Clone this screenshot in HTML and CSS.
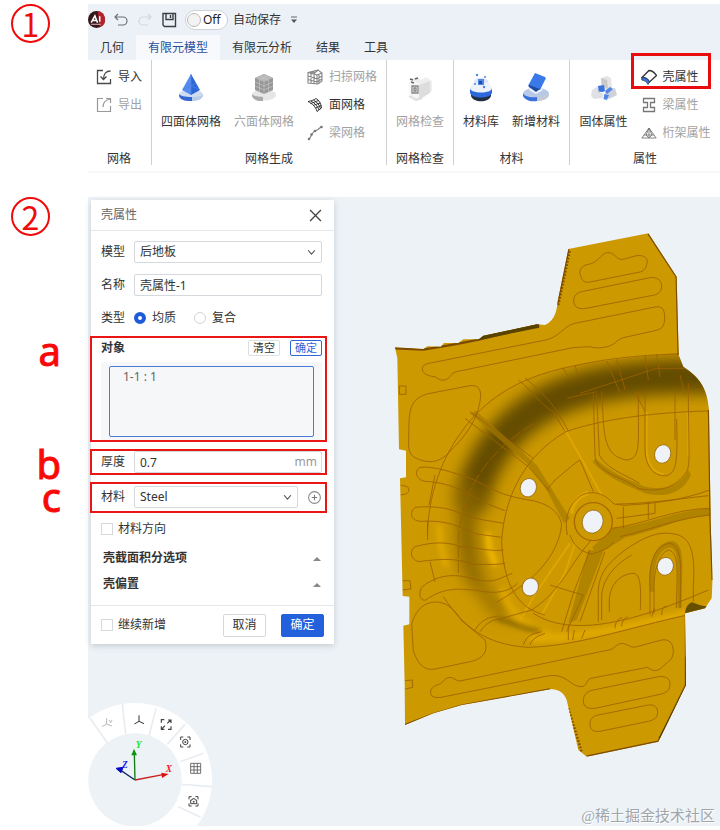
FILE: index.html
```html
<!DOCTYPE html>
<html lang="zh-CN">
<head>
<meta charset="utf-8">
<meta name="viewport" content="width=device-width, initial-scale=1">
<title>壳属性</title>
<link rel="stylesheet" href="styles.css">
</head>
<body>
<main class="guide">
  <section class="step">
    <div class="step-number">1</div>
    <div class="app">
      <div class="titlebar">
        <svg class="logo" viewBox="0 0 16 16" aria-hidden="true"><circle cx="8" cy="8" r="8" fill="#35161b"/><path d="M9 0a8 8 0 0 1 2 15.400z" fill="#b3232c"/><path d="M3 11 6.500 4.500 9 11M4.500 9h4M11 5v5" fill="none" stroke="#fff" stroke-width="1.500"/><path d="M3 12.500h9" stroke="#d8b3b5"/></svg>
        <button class="tool" aria-label="撤销"><svg viewBox="0 0 16 16"><path d="M5 2 2 5l3 3M2 5h8a4 4 0 0 1 0 8H5" fill="none" stroke="#6b7075" stroke-width="1.200"/></svg></button>
        <button class="tool" aria-label="重做"><svg viewBox="0 0 16 16"><path d="m11 2 3 3-3 3M14 5H6a4 4 0 0 0 0 8h5" fill="none" stroke="#d3d8dd" stroke-width="1.200"/></svg></button>
        <button class="tool" aria-label="保存"><svg viewBox="0 0 16 16"><path d="M2 1.500h12.500v13H3.500L2 13zM5 1.500v6h7v-6M9.500 3v3" fill="none" stroke="#3a3f44" stroke-width="1.400"/></svg></button>
        <label class="switch"><input type="checkbox" aria-label="自动保存"><span>Off</span></label>
        <span class="autosave">自动保存</span>
        <button class="more" aria-label="更多"><svg viewBox="0 0 8 8"><path d="M1 1h6" stroke="#666"/><path d="M1 3.500h6L4 7z" fill="#555"/></svg></button>
      </div>
      <nav class="tabs">
        <button class="tab">几何</button><button class="tab active">有限元模型</button><button class="tab">有限元分析</button><button class="tab">结果</button><button class="tab">工具</button>
      </nav>
      <div class="ribbon">
        <div class="group">
          <div class="group-body">
            <div class="small-list">
              <button class="small"><svg viewBox="0 0 16 16"><path d="M7 1.500H1.500v13h13V10M14.500 2C10 2 7.500 5 7.500 10M4.500 7.500l3 3 3-3" fill="none" stroke="#4a4a4a" stroke-width="1.300"/></svg>导入</button>
              <button class="small" disabled><svg viewBox="0 0 16 16"><path d="M7 1.500H1.500v13h13V9M7 10C7 6 9.500 3 14 2M10 1.500h4.500V6" fill="none" stroke="#999" stroke-width="1.200"/></svg>导出</button>
            </div>
          </div>
          <div class="caption">网格</div>
        </div>
        <div class="group">
          <div class="group-body">
            <button class="big"><svg viewBox="0 0 30 30"><ellipse cx="15" cy="23" rx="12" ry="5.500" fill="#cfdcf2"/><path d="M3 22v2c1 4 7 5.500 13 5v-4C9 25 4 24 3 22z" fill="#3568cf"/><path d="M16 25c6 0 10-1 11-3v2c-1 3-5 5-11 5z" fill="#b9cbea"/><path d="M15 2 6 18l9 5z" fill="#568cf0"/><path d="m15 2 9 16-9 5z" fill="#2d66d6"/><path d="m10 11 5 3 5-3M15 2v21M7 17l8-3 8 3" fill="none" stroke="#4d82e8" stroke-width=".7"/></svg>四面体网格</button>
            <button class="big" disabled><svg viewBox="0 0 30 30"><ellipse cx="15" cy="23" rx="12" ry="5.500" fill="#e6e6e6"/><path d="M3 22v2c1 4 7 5.500 11 5v-4C9 25 4 24 3 22z" fill="#aaa"/><path d="m15 2 9 4v12l-9 4-9-4V6z" fill="#979797"/><path d="m15 2 9 4-9 4-9-4z" fill="#b8b8b8"/><path d="M15 10v12M6 10l9 4 9-4M6 14l9 4 9-4M10.500 8v12M19.500 8v12M10 4l9 4M19 4l-9 4" fill="none" stroke="#c4c4c4" stroke-width=".7"/></svg>六面体网格</button>
            <div class="small-list">
              <button class="small" disabled><svg viewBox="0 0 16 16"><path d="M1 3.500 11 1l4 3v8l-4 3-10-1zM1 3.500 10 6v9M10 6l5-2M1 7l9 3 5-3M1 10.500l9 2.500 5-3M4 3v11M7 2v12.500M4 4.500 8 1.500M6.500 5 11 1M12 5v9" fill="none" stroke="#858585" stroke-width="1.100"/></svg>扫掠网格</button>
              <button class="small"><svg viewBox="0 0 16 16"><path d="M1 4.500C4 4 7 3 9 1.500c3 1.500 5 5 5.500 9.500L10 14.500C9 10 5 6.500 1 4.500zM3.500 6.500C7 5.500 9 4.500 11.500 3.500M6 8.500c3-1 5-2 7.500-2.500M8.500 11c2-1 4-1.500 6-2.500M4 4c4 2 7 6 8 9M6.500 3c4 2.500 6 5 7 9" fill="none" stroke="#262626" stroke-width=".9"/></svg>面网格</button>
              <button class="small" disabled><svg viewBox="0 0 16 16"><path d="M2 14C5 11 5 7 8 6s3-1 6-4" fill="none" stroke="#888" stroke-width="1.200"/><g fill="#777"><circle cx="2" cy="14" r="1.300"/><circle cx="4.500" cy="9.500" r="1.300"/><circle cx="8" cy="6" r="1.300"/><circle cx="14.500" cy="2" r="1.300"/></g></svg>梁网格</button>
            </div>
          </div>
          <div class="caption">网格生成</div>
        </div>
        <div class="group">
          <div class="group-body">
            <button class="big" disabled><svg viewBox="0 0 30 30"><path d="m4 7 8-2 4 3 5-3 6 4v10l-9 7-7 2-6-4z" fill="#eee"/><path d="m4 7 10 5v15L5 23z" fill="#f7f7f7"/><path d="m14 13 11-4v12l-11 6z" fill="#ddd"/><path d="m5 7 3 1M6 10l3 1M10 7l3-1" stroke="#666" stroke-width="1.500"/><path d="M7 14h6v7H7zM9 16h2v3H9z" fill="none" stroke="#858585" stroke-width="1.300"/><path d="m4 24 7 4 6-2" fill="none" stroke="#ddd" stroke-width="2"/></svg>网格检查</button>
          </div>
          <div class="caption">网格检查</div>
        </div>
        <div class="group">
          <div class="group-body">
            <button class="big"><svg viewBox="0 0 30 30"><path d="M5 20v4c2 7 18 7 20 0v-4z" fill="#222f42"/><path d="M4 16v5c2 6 20 6 22 0v-5z" fill="#2d69dc"/><path d="M8 9 4 16c0 6 22 6 22 0l-4-7z" fill="#edf2fb"/><ellipse cx="15" cy="9" rx="7" ry="3" fill="#dce6f7"/><path d="M12 7h6v6h-6z" fill="#4f86e7"/><path d="M13 9h3v3h-3z" fill="#1e4da9"/><g fill="#4b85ed"><circle cx="11" cy="3" r="1.200"/><circle cx="19" cy="5" r="1"/><circle cx="9" cy="12" r="1"/><circle cx="18" cy="15" r="1.200"/></g></svg>材料库</button>
            <button class="big"><svg viewBox="0 0 30 30"><ellipse cx="15" cy="22" rx="13" ry="6.500" fill="#b8c9e8"/><path d="M2 21v3c2 4 7 6 14 5v-4C9 26 3 24 2 21z" fill="#3870dc"/><path d="M16 25c6 0 10-2 12-4v3c-2 3-6 5-12 5z" fill="#c4cbd6"/><path d="m8 18 7-8 7 8-7 4z" fill="#eef3fc"/><path d="m14 1 10 4c1 1 1 2 0 3l-5 10-11-3c-1-1-1-2 0-3z" fill="#3c79e8"/><path d="m8 13 11 4-4 3-7-5z" fill="#204b9d"/></svg>新增材料</button>
          </div>
          <div class="caption">材料</div>
        </div>
        <div class="group last">
          <div class="group-body">
            <button class="big"><svg viewBox="0 0 30 30"><path d="m12 6 6-2 4 2 1 10-6 2-5-4z" fill="#e4e4e4"/><path d="m12 6 6 2 1 9-6-3z" fill="#c9c9c9"/><path d="m3 18 8-5 5 4-2 9-9 1-3-3z" fill="#dfe1e5"/><path d="m17 18 9-2 2 7-8 4-5-4z" fill="#cdd1d8"/><path d="m9 14 6-1 1 6-6 2z" fill="#3c74df"/><path d="m16 19 5-4 3 2-6 5zM15 22l5 1-2 5-4-1z" fill="#4f86e7"/><path d="m10 20 5 1-1 6" fill="none" stroke="#fff"/></svg>固体属性</button>
            <div class="small-list">
              <button class="small boxed"><svg viewBox="0 0 16 16"><path d="M1 8.500 8 1.500c3 0 5.500 2 7.500 5L8.500 13C7 10 4.500 8.500 1 8.500z" fill="#fff" stroke="#333" stroke-width="1.300"/><path d="M1 8.500c3.500 0 6 1.500 7.500 4.500L7 15.500C5.500 12.500 3.500 11.500.7 11z" fill="#3f73d4" stroke="#273f70" stroke-width=".8"/></svg>壳属性</button>
              <button class="small" disabled><svg viewBox="0 0 16 16"><path d="M2.500 1.500h11v4h-4v5h4v4h-11v-4h4v-5h-4z" fill="none" stroke="#777" stroke-width="1.300"/></svg>梁属性</button>
              <button class="small" disabled><svg viewBox="0 0 16 16"><path d="M8 3 .8 13h14.400zM8 3v10M8 3 5 10l3 3 3-3zM3 10h10" fill="none" stroke="#777" stroke-width=".9"/></svg>桁架属性</button>
            </div>
          </div>
          <div class="caption">属性</div>
        </div>
      </div>
    </div>
  </section>

  <section class="step">
    <div class="step-number">2</div>
    <div class="viewport">
      <div class="side">
        <form class="dialog">
          <div class="dialog-head">
            <span>壳属性</span>
            <button type="button" class="close" aria-label="关闭"><svg viewBox="0 0 12 12"><path d="m1 1 10 10M11 1 1 11" stroke="#444" stroke-width="1.200"/></svg></button>
          </div>
          <div class="fields">
            <div class="field">
              <label for="model">模型</label>
              <div class="control"><select id="model"><option>后地板</option></select><svg class="arrow" viewBox="0 0 8 8"><path d="m1 2 3 3.500L7 2" fill="none" stroke="#555"/></svg></div>
            </div>
            <div class="field">
              <label for="name">名称</label>
              <div class="control"><input id="name" type="text" value="壳属性-1"></div>
            </div>
            <div class="field">
              <span>类型</span>
              <div class="radios">
                <label><input type="radio" name="kind" checked>均质</label>
                <label><input type="radio" name="kind">复合</label>
              </div>
            </div>
          </div>
          <div class="callout">
            <span class="mark">a</span>
            <div class="object-head">
              <label for="object">对象</label>
              <button type="button" class="mini">清空</button>
              <button type="button" class="mini accent">确定</button>
            </div>
            <div class="object-body"><textarea id="object" readonly>1-1 : 1</textarea></div>
          </div>
          <div class="callout">
            <span class="mark">b</span>
            <div class="field">
              <label for="thickness">厚度</label>
              <div class="control"><input id="thickness" type="text" value="0.7"><span class="unit">mm</span></div>
            </div>
          </div>
          <div class="callout roomy">
            <span class="mark">c</span>
            <div class="field with-add">
              <label for="material">材料</label>
              <div class="control"><select id="material"><option>Steel</option></select><svg class="arrow" viewBox="0 0 8 8"><path d="m1 2 3 3.500L7 2" fill="none" stroke="#555"/></svg></div>
              <button type="button" class="add" aria-label="新增材料"><svg viewBox="0 0 14 14"><circle cx="7" cy="7" r="5.500" fill="none" stroke="#888"/><path d="M4.500 7h5M7 4.500v5" stroke="#777"/></svg></button>
            </div>
          </div>
          <label class="check direction"><input type="checkbox">材料方向</label>
          <button type="button" class="fold">壳截面积分选项<svg viewBox="0 0 8 5"><path d="M0 5 4 1l4 4z" fill="#888"/></svg></button>
          <button type="button" class="fold">壳偏置<svg viewBox="0 0 8 5"><path d="M0 5 4 1l4 4z" fill="#888"/></svg></button>
          <div class="dialog-foot">
            <label class="check"><input type="checkbox">继续新增</label>
            <button type="button" class="action">取消</button>
            <button type="button" class="action primary">确定</button>
          </div>
        </form>
        <svg class="dial" viewBox="24 30 381 378" role="img" aria-label="视图方向">
          <circle cx="165" cy="270" r="231" fill="#fff"/>
          <circle cx="165" cy="270" r="140" fill="#edf2f6"/>
          <path d="m30 85 53 75M127 42l10 90M228 55l-21 83M315 103l-53 60M370 190l-70 25M395 290l-90-7M362 382l-67-32" stroke="#e9edf1" stroke-width="5"/>
          <g fill="none" stroke="#bbb" stroke-width="3"><path d="M80 84v18l-14 8M80 102l16 6M88 90l4 8 4-8"/></g>
          <path d="M177 76v18l-14 8M177 94l15 7" fill="none" stroke="#333" stroke-width="3"/>
          <path d="M244 98v-9h9M264 90h9v9M273 109v9h-9M253 118h-9v-9M262 100l10-10M255 107l-10 10" fill="none" stroke="#444" stroke-width="3.500"/>
          <path d="M302 150v-9h8M322 141h8v9M330 163v8h-8M310 171h-8v-8" fill="none" stroke="#444" stroke-width="3"/><circle cx="316" cy="156" r="8" fill="none" stroke="#444" stroke-width="3"/><circle cx="316" cy="156" r="3" fill="#555"/>
          <path d="M332 220h30v30h-30zM342 220v30M352 220v30M332 230h30M332 240h30" fill="none" stroke="#555" stroke-width="2.500"/>
          <path d="M327 328v-8h8M346 320h8v8M354 340v8h-8M335 348h-8v-8" fill="none" stroke="#444" stroke-width="3"/><path d="M332 330h4l2-4h6l2 4h4v11h-18z" fill="none" stroke="#444" stroke-width="3"/><circle cx="341" cy="335" r="3" fill="#555"/>
          <path d="m165 270-47-32" stroke="#172469" stroke-width="4"/><path d="m108 235 21-3-6 16z" fill="#0b0bc2" stroke="#0b0bc2" stroke-width="3"/>
          <path d="m165 270-2-78" stroke="#147b14" stroke-width="4"/><path d="m162 176 9 20h-17z" fill="#0d930d"/>
          <path d="m165 270 84-16" stroke="#c91e1e" stroke-width="4"/><path d="m266 252-20 12-2-16z" fill="#dd1010"/>
          <g class="axis"><text x="167" y="173" fill="#26e126">Y</text><text x="257" y="247" fill="#f01818">X</text><text x="126" y="235" fill="#1515ee">Z</text></g>
        </svg>
      </div>

      <svg class="part" viewBox="0 0 990 1605" role="img" aria-label="后地板模型">
        <defs>
          <clipPath id="body"><path d="M15 367 100 372 112 364 152 365 162 354 205 354 220 343 266 343 280 332 440 298 465 300C485 292 500 270 502 235L535 72 775 25 860 155 866 390 880 425C925 455 952 485 957 555L962 895 968 1065 965 1120 945 1150 885 1165 888 1380 805 1550 590 1595 565 1575 530 1425C520 1400 505 1393 480 1393L215 1440 130 1465 45 1500 44 1380 40 1202 58 1198V1115L38 1113 30 760 48 757V677L27 673 22 400z"/></clipPath>
          <clipPath id="bowl"><path d="M990 375C770 390 640 405 540 425 360 460 290 530 235 590 150 690 115 800 115 930 120 1050 150 1130 215 1190 270 1240 320 1260 400 1268 570 1262 770 1190 990 1145z"/></clipPath>
          <filter id="soft" x="-30%" y="-30%" width="160%" height="160%"><feGaussianBlur stdDeviation="22"/></filter>
          <filter id="fine" x="-30%" y="-30%" width="160%" height="160%"><feGaussianBlur stdDeviation="8"/></filter>
        </defs>
        <g clip-path="url(#body)">
          <path d="M0 0h990v1605H0z" fill="#cc9900"/>
          <g clip-path="url(#bowl)">
            <g fill="none" filter="url(#soft)" stroke-linecap="round">
              <path d="M970 455C750 450 570 472 440 550 330 620 270 720 245 820" stroke="#644b00" stroke-width="104"/>
              <path d="M240 800c-20 100-10 190 15 260" stroke="#866300" stroke-width="56"/>
              <path d="M245 1010c20 65 40 105 90 155" stroke="#906b00" stroke-width="34"/>
            </g>
            <g fill="none" filter="url(#fine)" stroke-linecap="round">
              <path d="M148 905c0 50 8 80 20 115" stroke="#e6ae00" stroke-width="12"/>
              <path d="M295 930c0 40 10 60 20 85" stroke="#f0b700" stroke-width="18"/>
              <path d="M340 1100c25 75 85 120 170 140" stroke="#dca500" stroke-width="24"/>
              <path d="M430 1240c170 0 300-40 540-90" stroke="#e0a900" stroke-width="24"/>
              <path d="M325 1180c40 15 80 30 120 38" stroke="#886500" stroke-width="14"/>
            </g>
          </g>
          <g fill="#a47a00" opacity=".65">
            <path d="M240 565 258 557 440 720 540 880 522 895 470 795 410 715z"/>
            <path d="M615 700c50 45 90 60 150 85 55 10 100 5 130-50l8 14c-25 60-85 70-140 55-60-25-110-45-155-92z"/>
            <path d="M665 910c90-5 200-55 297-60v22c-90 3-160 45-255 65l-90 55-10-25z"/>
            <path d="m595 975 45 5-80 205-25 10z"/>
            <path d="M780 1100c-10-80 15-145 60-152 40 0 40 55 35 130v70h-12v-95c0-60-5-85-25-85-35 5-50 55-45 132z"/>
          </g>
          <path d="M885 1165c2-15 5-25 20-33 30 10 40 15 62 8l-20 20z" fill="#665000"/>
          <g fill="none" stroke="#e2a900" stroke-width="6" opacity=".8">
            <path d="M770 560v110c0 50 25 75 50 78"/><path d="M895 560v135"/><path d="M545 865c0-30 20-50 50-62" stroke-width="13"/><path d="m540 955-100 145-50 85M555 955l-30 90-70 125"/><path d="m525 615 60 105 50 90"/>
          </g>
          <g fill="none" stroke="#9e6200" stroke-width="2.500">
            <path d="M575 160c-12-23-2-38 20-42 30-5 35-30 55-35 25-2 25 18 45 21l45-12c22-3 37 8 30 27-3 15-12 22-30 24l-140 28c-13 2-20 0-25-11z"/>
            <path d="m575 200 205-42c20-3 35 8 35 25s-10 26-32 29l-195 38c-22 4-37-4-37-22 0-15 8-24 24-28z"/>
            <path d="m550 296 245-50c20-4 29 7 29 30 0 25-6 35-25 40l-90 20c-25 3-28 18-50 27-25 8-45 6-60 2l-50 3-340 70c-20 3-24 10-32 20-15 12-28 8-40-2-20-3-40-8-40-25 0-12 12-15 30-18l340-68c40-9 50-37 83-49z"/>
            <path d="m110 507 130-25c22-3 32 8 32 30-5 65-40 115-90 165-30 36-65 40-100 24-23-8-28-25-26-60 2-70-5-115 54-134z"/>
            <path d="M865 387C735 390 625 405 540 425 370 460 275 535 215 620 155 700 115 810 112 930"/>
            <path d="M955 558c-180 4-330 28-427 62-115 65-185 185-193 330 5 125 45 200 130 220"/>
            <path d="M570 505 800 430h85M530 520l90-20"/><path d="M430 595c-120 75-210 180-225 340v110" stroke-dasharray="38 7"/>
            <path d="M385 465c45 35 60 70 105 95l35 60M405 458c50 45 80 65 130 160"/><path d="m225 580 190 145 65 75M240 560l190 140"/>
            <path d="m518 428 15 25M555 422l8 28M650 408l40 95M680 403l25 90M765 390l10 75M800 387l10 70M610 505l5 190c10 50 80 60 130 95 65 15 115-5 145-50 12-25 5-60 5-265M620 505l8 185c20 40 70 55 120 85M735 500l30 60M855 500v145M870 450l15 60"/>
            <path d="M635 500l5 90c5 65 15 105 70 115 35-5 37-25 35-135V500M765 500v180c5 60 40 75 65 72 30-10 33-40 30-170"/>
            <path d="M90 727c40-5 100 15 155 35 50 20 75 50 185 65 55 15 75 35 85 70-5 60-40 120-105 175-30 20-55 40-90 60M90 727c-20 12-10 38 15 42 90 5 130 40 180 65l60 23"/>
            <path d="M75 847c50-5 100 0 140 20 55 20 90 20 125 28M75 847c-20 20-10 42 20 42 75-5 110 15 165 38l75 10M75 965c55-15 95-15 140 0 60 5 90 15 125 10M75 965c-20 15-10 40 10 45 75-10 120-10 165 8 45 0 70 2 95-3"/>
            <path d="M97 1085c50-40 105-40 165-20 50 10 65-5 105-20M97 1085c-15 20-5 45 10 40 65-45 110-30 150-30 60 15 100 5 125-20"/>
            <path d="m135 750-18 90M113 890v55M120 1010l15 60M160 1115c75 115 155 145 255 152 165-5 310-65 540-110"/>
            <path d="m335 1180 90-25c105-70 120-160 205-235M430 1165c130 85 350 5 525-70"/>
            <path d="m470 795 25-30 60-50 15-10 40 95M480 1080l65 20 35 10-50 110M600 975l-50 130-35 115M645 980l-75 210"/>
            <path d="M532 930c-10-50 5-95 40-118 35-18 70-8 100 25l30 4c90-5 170-15 255-45M540 930c10 30 30 50 65 57 20-5 50-15 65-35M680 837c90 0 180-15 275-25M665 910c90-10 190-60 295-60M690 935c90-20 170-55 270-65M680 880l115-15v-30M775 830v52M700 845v65"/>
            <path d="M625 1190v-70c-5-75 30-105 80-145 65-45 110-60 160-45 45 15 50 75 45 155v45M635 1185v-75c5-60 55-100 90-120M658 1160v-40c5-45 35-75 75-75 20 5 20 50 18 110M780 1170v-80c-5-80 15-130 60-135 35 10 35 55 30 195M792 1165v-80c0-60 20-105 45-110 30 10 25 60 22 175"/>
            <path d="M255 1215c20-35 50-40 65-40M270 1220c20-30 45-38 65-38M400 1260c10-35 40-35 55-40M420 1260c8-25 35-30 45-35M535 1245v-45M548 1245l5-30M575 1240l10-25M675 1210c0-20 12-30 22-32M695 1205c0-15 8-25 18-30M785 1175l8-25M815 1170c0-20 8-25 15-27"/>
            <path d="M125 1132c45-7 70 25 90 55l70 58c10 35-5 55-40 64l-110 23c-30 5-50-10-65-55l-5-80c10-35 30-60 60-65z"/>
            <path d="m210 1368 455-95c15-10 20-22 40-16 15 6 20 12 35 8l75-20c20-3 35 6 35 35-2 30-20 30-32 45-20 20-35 10-45 2l-170 33c-15 3-10 25-30 25-30 0-45-40-95-33l-325 65c-25 3-35-5-30-22 10-20 25-10 40-30 20-20 35 5 47 3z"/>
            <path d="m610 1395 195-40c20-3 35 5 35 22s-10 27-30 31l-195 42c-20 2-35-3-35-22s10-29 30-33zM625 1470l150-30c18-2 28 7 28 22s-10 23-28 27l-145 30c-18 2-30-3-30-22 0-15 8-24 25-27z"/>
            <path d="M28 483h20v25H28zM32 780l20 5c8 8 5 18-5 22l-15 3M38 1067h22l3 25-25 3M45 1367l22-2 1 22-22 5"/>
          </g>
          <g fill="none" stroke="#7c4b00" stroke-width="7">
            <path d="M15 370 100 374 155 365 210 355 270 343 440 302M502 235 535 72M775 25 860 155 866 390M957 555 962 895 968 1065M888 1165V1380L805 1550 590 1595M45 1500 130 1467 215 1442 480 1393"/>
            <path d="M535 1450 575 1580M505 240 540 75" stroke-dasharray="5 5"/>
          </g>
          <path d="m270 342 175-36v-8l-165 34zM808 1540l80-155v-90 90z" fill="#594300" stroke="#594300" stroke-width="5"/>
          <circle cx="610" cy="890" r="57" fill="#cc9900" stroke="#a96900" stroke-width="4"/>
        </g>
        <g fill="#eff3f7" stroke="#8d5900" stroke-width="2">
          <ellipse cx="415" cy="788" rx="24" ry="28" transform="rotate(18 415 788)"/><ellipse cx="818" cy="687" rx="24" ry="28" transform="rotate(18 818 687)"/><ellipse cx="608" cy="890" rx="31" ry="35" transform="rotate(18 608 890)"/><ellipse cx="826" cy="1024" rx="24" ry="27" transform="rotate(18 826 1024)"/><ellipse cx="421" cy="1086" rx="24" ry="27" transform="rotate(18 421 1086)"/>
        </g>
      </svg>
      <span class="watermark">@稀土掘金技术社区</span>
    </div>
  </section>
</main>
</body>
</html>
```
FILE: styles.css
```css
* {
  box-sizing: border-box;
}

body {
  margin: 0;
  background: #fff;
  color: #333;
  font: 12px/16px "Noto Sans", "Noto Sans CJK SC", sans-serif;
}

button,
input,
select,
textarea {
  margin: 0;
  padding: 0;
  border: 0;
  background: none;
  color: inherit;
  font: inherit;
}

svg {
  display: block;
  flex: none;
}

.guide {
  display: grid;
  gap: 24px;
  padding: 4px 0;
}

.step {
  display: grid;
  grid-template-columns: 88px minmax(0, 1fr);
}

.step-number {
  width: 39px;
  height: 39px;
  margin-left: 11px;
  border: 2px solid #f00a0a;
  border-radius: 50%;
  color: #f00a0a;
  font: 32px/34px "Noto Sans CJK SC", sans-serif;
  text-align: center;
}

/* Ribbon */

.app {
  background: #ecf1f7;
}

.titlebar {
  display: flex;
  align-items: center;
  height: 31px;
}

.logo {
  width: 17px;
  height: 17px;
  margin-right: 8px;
}

.tool {
  margin-right: 8px;
}

.tool svg {
  width: 16px;
  height: 16px;
}

.switch {
  display: flex;
  align-items: center;
  gap: 2px;
  width: 43px;
  height: 20px;
  padding: 0 1px;
  border: 1px solid #cfd2d5;
  border-radius: 10px;
  background: #fff;
  color: #222;
}

.switch input {
  appearance: none;
  flex: none;
  width: 14px;
  height: 14px;
  border: 1px solid #bbb;
  border-radius: 50%;
  background: #f3f3f3;
}

.autosave {
  margin: 0 9px 0 5px;
}

.more svg {
  width: 8px;
  height: 8px;
}

.tabs {
  display: flex;
}

.tab {
  height: 25px;
  padding: 0 12px;
}

.tab.active {
  background: #f7f9fd;
  color: #294f9c;
}

.ribbon {
  display: flex;
  border-bottom: 2px solid #f6f7f9;
  background: #fff;
}

.group {
  position: relative;
  padding: 3px 10px 0 9px;
}

.group::after {
  content: "";
  position: absolute;
  inset: 0 0 6px auto;
  width: 1px;
  background: #d0d0d0;
}

.group:first-child {
  padding-left: 8px;
}

.group.last {
  flex: 1;
  padding: 3px 9px 0;
}

.group.last::after {
  display: none;
}

.group-body {
  display: flex;
  justify-content: center;
  gap: 13px;
  min-height: 84px;
}

.caption {
  line-height: 24px;
  text-align: center;
}

.small-list {
  display: flex;
  flex-direction: column;
}

.small {
  position: relative;
  display: flex;
  align-items: center;
  align-self: flex-start;
  gap: 6px;
  height: 28px;
  white-space: nowrap;
}

.small svg {
  width: 16px;
  height: 16px;
}

.small:disabled,
.big:disabled {
  color: #a2a2a2;
}

.big {
  display: flex;
  flex-direction: column;
  align-items: center;
  align-self: flex-start;
  gap: 12px;
  padding-top: 9px;
  white-space: nowrap;
}

.big svg {
  width: 30px;
  height: 30px;
}

.boxed::after {
  content: "";
  position: absolute;
  inset: -10px -12px 2px -10px;
  border: 3px solid #e80c0c;
}

/* Model viewport */

.viewport {
  position: relative;
  display: grid;
  grid-template-columns: 302px minmax(0, 1fr);
  align-items: start;
  background: #edf2f6;
}

.side {
  display: grid;
  gap: 56px;
  padding: 3px 0 0;
}

.part {
  width: 100%;
  margin-top: 28px;
}

.dial {
  width: 127px;
}

.axis {
  font: italic 700 28px "Liberation Serif", serif;
}

.watermark {
  position: absolute;
  right: 5px;
  bottom: 0;
  color: #a0a5ab;
  font: 15px/20px "Liberation Serif", "Noto Sans CJK SC", serif;
  text-shadow: 1px 1px 0 #fff;
}

/* Shell property dialog */

.dialog {
  width: 243px;
  margin-left: 3px;
  background: #fff;
  box-shadow: 0 2px 6px #c5ccd3;
}

.dialog-head {
  display: flex;
  align-items: center;
  justify-content: space-between;
  height: 31px;
  padding: 0 12px 0 10px;
  border-bottom: 1px solid #e4e7ea;
  color: #666;
}

.close svg {
  width: 13px;
  height: 13px;
}

.fields {
  display: grid;
  gap: 11px;
  padding: 10px 12px 0 10px;
}

.field {
  display: grid;
  grid-template-columns: 33px minmax(0, 1fr);
  align-items: center;
  height: 22px;
}

.field.with-add {
  grid-template-columns: 33px minmax(0, 1fr) 24px;
}

.control {
  position: relative;
}

.control input,
.control select {
  appearance: none;
  display: block;
  width: 100%;
  height: 22px;
  padding: 0 5px;
  border: 1px solid #d5d9dd;
  border-radius: 2px;
}

.arrow {
  position: absolute;
  top: 7px;
  right: 6px;
  width: 9px;
  height: 9px;
  pointer-events: none;
}

.unit {
  position: absolute;
  top: 3px;
  right: 5px;
  color: #999;
}

.radios {
  display: flex;
  gap: 18px;
}

.radios label {
  display: flex;
  align-items: center;
  gap: 6px;
}

.radios input {
  appearance: none;
  width: 12px;
  height: 12px;
  border: 1px solid #d0d4d8;
  border-radius: 50%;
}

.radios input:checked {
  border: 4px solid #1f5bd8;
}

.callout {
  position: relative;
  margin: 7px 7px 0 -1px;
  padding: 0 3px 0 9px;
  border: 2px solid #ea1515;
}

.callout.roomy {
  padding-top: 2px;
  padding-bottom: 3px;
}

.mark {
  position: absolute;
  top: -3px;
  right: 100%;
  margin-right: 31px;
  color: #fa0808;
  font-size: 40px;
  line-height: 32px;
  -webkit-text-stroke: 1px #fa0808;
}

.object-head {
  display: flex;
  align-items: center;
  padding: 2px 0 6px;
}

.object-head label {
  flex: 1;
  font-weight: 700;
}

.mini {
  height: 16px;
  margin-left: 10px;
  padding: 0 4px;
  border: 1px solid #dde0e3;
  border-radius: 2px;
  font-size: 11px;
  line-height: 14px;
}

.mini.accent {
  border-color: #2f66da;
  color: #2f66da;
}

.object-body {
  padding: 4px 8px 3px;
  background: #f5f7f9;
}

.object-body textarea {
  display: block;
  width: 100%;
  height: 71px;
  padding: 2px 13px;
  border: 1px solid #4c7bd3;
  border-radius: 2px;
  resize: none;
  color: #666;
}

.add {
  justify-self: end;
}

.add svg {
  width: 15px;
  height: 15px;
}

.check {
  display: flex;
  align-items: center;
  gap: 5px;
}

.check input {
  appearance: none;
  width: 12px;
  height: 12px;
  border: 1px solid #d5d9dd;
}

.direction {
  padding: 8px 10px;
}

.fold {
  display: flex;
  align-items: center;
  justify-content: space-between;
  width: 100%;
  height: 26px;
  padding: 0 13px 0 12px;
  font-weight: 700;
}

.fold svg {
  width: 8px;
  height: 5px;
}

.dialog-foot {
  display: flex;
  align-items: center;
  gap: 15px;
  height: 39px;
  margin-top: 8px;
  padding: 0 10px;
  border-top: 1px solid #e4e7ea;
}

.dialog-foot .check {
  flex: 1;
}

.action {
  width: 43px;
  height: 23px;
  border: 1px solid #d5d9dd;
  border-radius: 2px;
}

.action.primary {
  border-color: #2260dc;
  background: #2260dc;
  color: #fff;
}
```
